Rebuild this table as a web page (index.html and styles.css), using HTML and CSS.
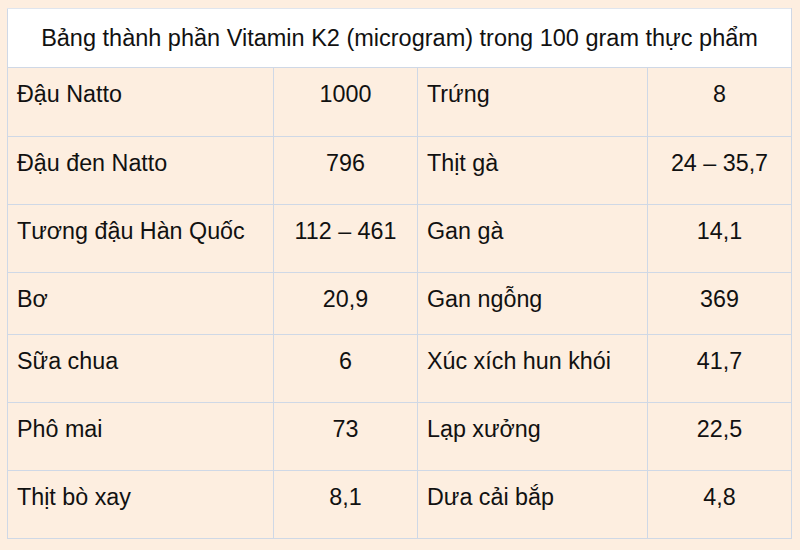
FILE: index.html
```html
<!DOCTYPE html>
<html lang="vi">
<head>
<meta charset="utf-8">
<link rel="stylesheet" href="styles.css">
</head>
<body>
<table class="vk">
  <colgroup>
    <col class="c-name"><col class="c-val"><col class="c-name2"><col class="c-val">
  </colgroup>
  <tr class="title-row"><th colspan="4">Bảng thành phần Vitamin K2 (microgram) trong 100 gram thực phẩm</th></tr>
  <tr class="r1"><td class="name">Đậu Natto</td><td class="val">1000</td><td class="name">Trứng</td><td class="val">8</td></tr>
  <tr class="r2"><td class="name">Đậu đen Natto</td><td class="val">796</td><td class="name">Thịt gà</td><td class="val">24 – 35,7</td></tr>
  <tr class="r3"><td class="name">Tương đậu Hàn Quốc</td><td class="val">112 – 461</td><td class="name">Gan gà</td><td class="val">14,1</td></tr>
  <tr class="r4"><td class="name">Bơ</td><td class="val">20,9</td><td class="name">Gan ngỗng</td><td class="val">369</td></tr>
  <tr class="r5"><td class="name">Sữa chua</td><td class="val">6</td><td class="name">Xúc xích hun khói</td><td class="val">41,7</td></tr>
  <tr class="r6"><td class="name">Phô mai</td><td class="val">73</td><td class="name">Lạp xưởng</td><td class="val">22,5</td></tr>
  <tr class="r7"><td class="name">Thịt bò xay</td><td class="val">8,1</td><td class="name">Dưa cải bắp</td><td class="val">4,8</td></tr>
</table>
</body>
</html>
```
FILE: styles.css
```css
html, body {
  margin: 0;
  padding: 0;
  background: #fdeee0;
}
body {
  padding: 8px 0 0 7px;
  font-family: "Liberation Sans", Arial, sans-serif;
  color: #111;
}
.vk {
  border-collapse: collapse;
  table-layout: fixed;
  width: 785px;
}
.c-name { width: 266px; }
.c-val { width: 144px; }
.c-name2 { width: 230px; }
.vk th, .vk td {
  border: 1px solid #cfd8e6;
  padding: 0;
  vertical-align: top;
  box-sizing: border-box;
}
.title-row th {
  background: #ffffff;
  font-weight: normal;
  font-size: 23.5px;
  height: 59px;
  vertical-align: middle;
  text-align: center;
  border-top-color: #dfe5ee;
}
.vk td {
  background: #fdeee0;
  font-size: 23.3px;
  line-height: 26px;
  padding-top: 13px;
  height: 68px;
}
.vk td.name { text-align: left; padding-left: 9px; }
.vk td.val { text-align: center; }
.r1 td { height: 69px; }
.r4 td { height: 62px; }
```
